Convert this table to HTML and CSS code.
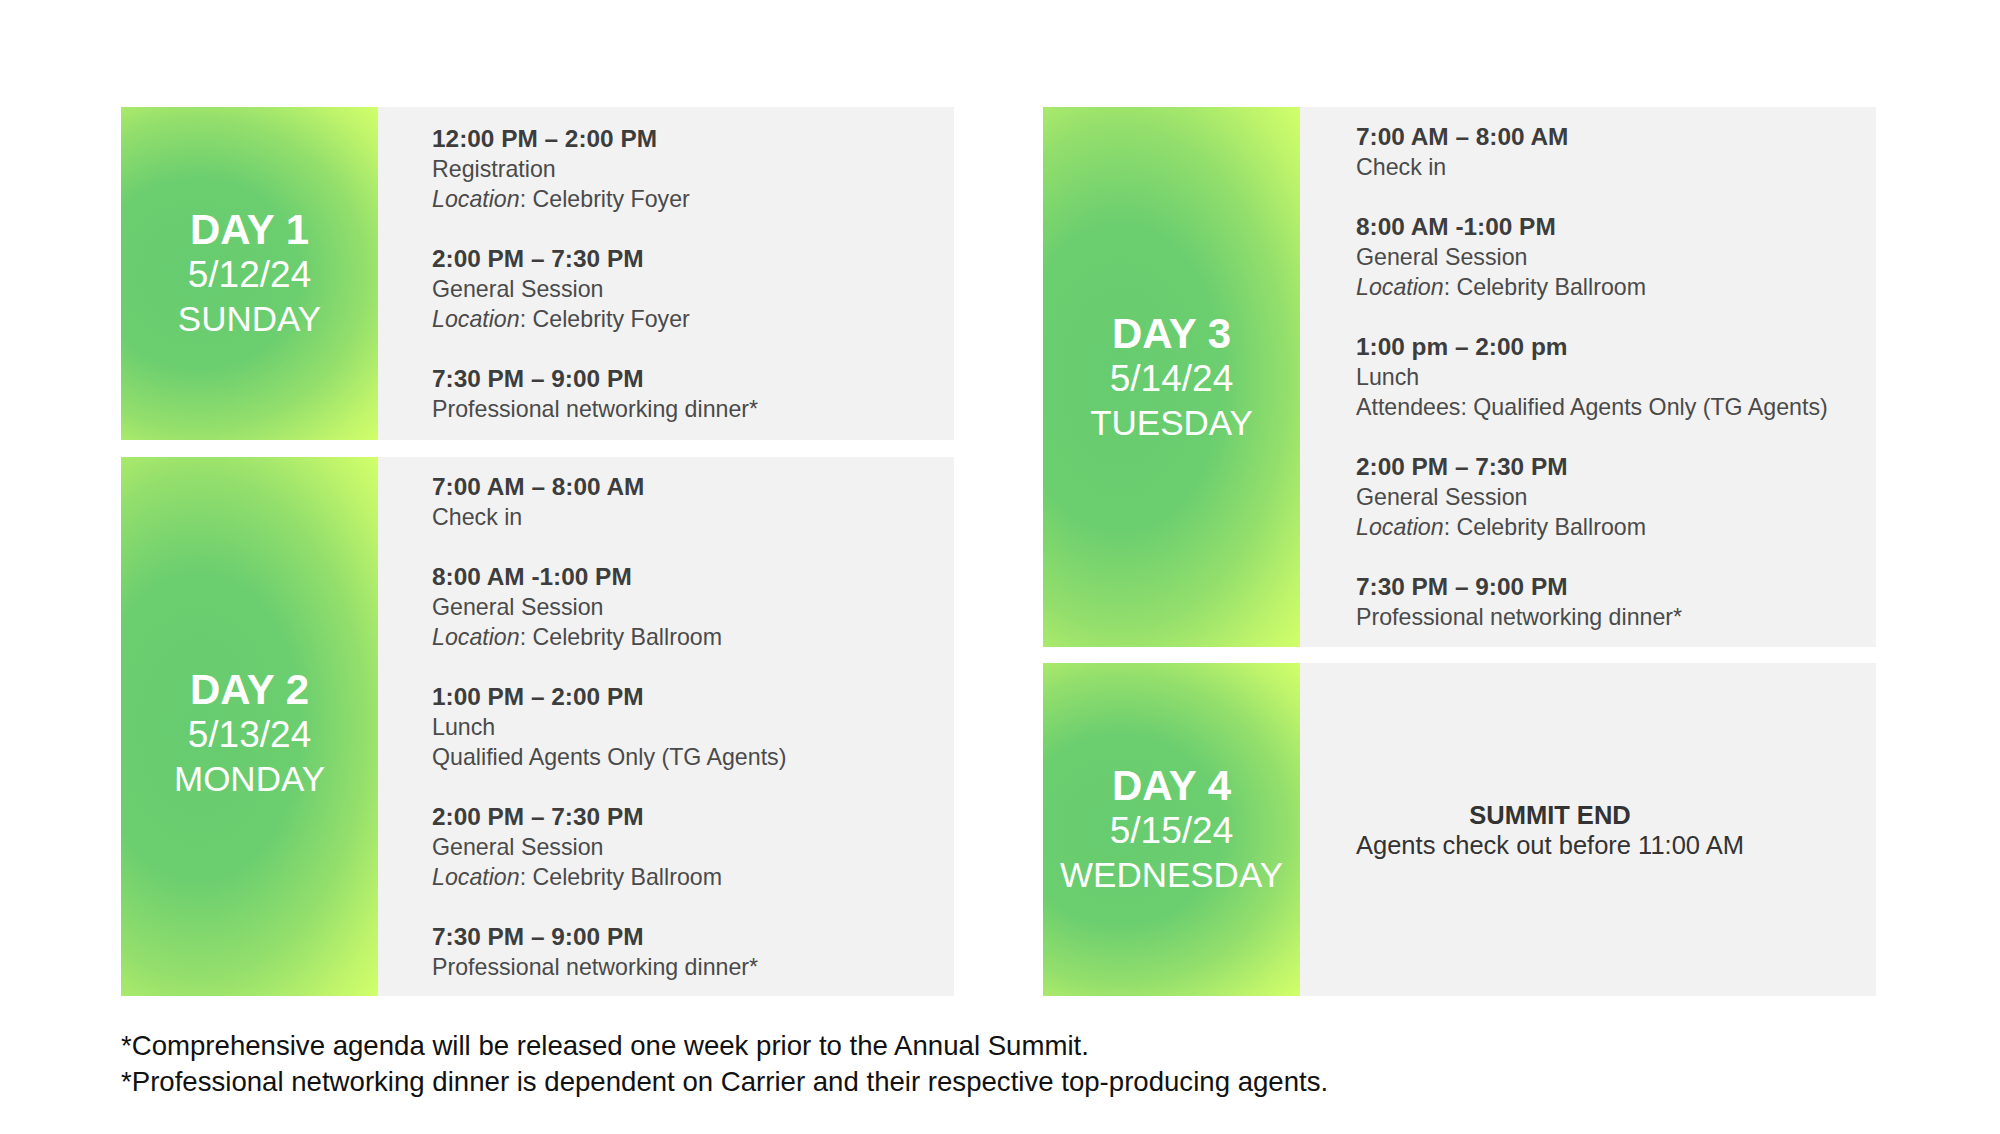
FILE: index.html
```html
<!DOCTYPE html>
<html lang="en">
<head>
<meta charset="utf-8">
<title>Summit Agenda</title>
<link rel="stylesheet" href="styles.css">
</head>
<body>
<main class="page">
  <div class="grid">
    <div class="column">
      <section class="day day-short">
        <div class="label">
          <div class="label-num">DAY 1</div>
          <div class="label-date">5/12/24</div>
          <div class="label-week">SUNDAY</div>
        </div>
        <div class="details">
          <div class="event">
            <div class="time">12:00 PM – 2:00 PM</div>
            <div class="line">Registration</div>
            <div class="line"><em>Location</em>: Celebrity Foyer</div>
          </div>
          <div class="event">
            <div class="time">2:00 PM – 7:30 PM</div>
            <div class="line">General Session</div>
            <div class="line"><em>Location</em>: Celebrity Foyer</div>
          </div>
          <div class="event">
            <div class="time">7:30 PM – 9:00 PM</div>
            <div class="line">Professional networking dinner*</div>
          </div>
        </div>
      </section>
      <section class="day day-tall">
        <div class="label label-low">
          <div class="label-num">DAY 2</div>
          <div class="label-date">5/13/24</div>
          <div class="label-week">MONDAY</div>
        </div>
        <div class="details">
          <div class="event">
            <div class="time">7:00 AM – 8:00 AM</div>
            <div class="line">Check in</div>
          </div>
          <div class="event">
            <div class="time">8:00 AM -1:00 PM</div>
            <div class="line">General Session</div>
            <div class="line"><em>Location</em>: Celebrity Ballroom</div>
          </div>
          <div class="event">
            <div class="time">1:00 PM – 2:00 PM</div>
            <div class="line">Lunch</div>
            <div class="line">Qualified Agents Only (TG Agents)</div>
          </div>
          <div class="event">
            <div class="time">2:00 PM – 7:30 PM</div>
            <div class="line">General Session</div>
            <div class="line"><em>Location</em>: Celebrity Ballroom</div>
          </div>
          <div class="event">
            <div class="time">7:30 PM – 9:00 PM</div>
            <div class="line">Professional networking dinner*</div>
          </div>
        </div>
      </section>
    </div>
    <div class="column">
      <section class="day day-tall-r">
        <div class="label">
          <div class="label-num">DAY 3</div>
          <div class="label-date">5/14/24</div>
          <div class="label-week">TUESDAY</div>
        </div>
        <div class="details details-r">
          <div class="event">
            <div class="time">7:00 AM – 8:00 AM</div>
            <div class="line">Check in</div>
          </div>
          <div class="event">
            <div class="time">8:00 AM -1:00 PM</div>
            <div class="line">General Session</div>
            <div class="line"><em>Location</em>: Celebrity Ballroom</div>
          </div>
          <div class="event">
            <div class="time">1:00 pm – 2:00 pm</div>
            <div class="line">Lunch</div>
            <div class="line">Attendees: Qualified Agents Only (TG Agents)</div>
          </div>
          <div class="event">
            <div class="time">2:00 PM – 7:30 PM</div>
            <div class="line">General Session</div>
            <div class="line"><em>Location</em>: Celebrity Ballroom</div>
          </div>
          <div class="event">
            <div class="time">7:30 PM – 9:00 PM</div>
            <div class="line">Professional networking dinner*</div>
          </div>
        </div>
      </section>
      <section class="day day-short">
        <div class="label">
          <div class="label-num">DAY 4</div>
          <div class="label-date">5/15/24</div>
          <div class="label-week">WEDNESDAY</div>
        </div>
        <div class="details details-r">
          <div class="end">
            <div class="end-title">SUMMIT END</div>
            <div class="end-text">Agents check out before 11:00 AM</div>
          </div>
        </div>
      </section>
    </div>
  </div>
  <footer class="notes">
    <p>*Comprehensive agenda will be released one week prior to the Annual Summit.</p>
    <p>*Professional networking dinner is dependent on Carrier and their respective top-producing agents.</p>
  </footer>
</main>
</body>
</html>
```
FILE: styles.css
```css
html, body {
  margin: 0;
  padding: 0;
  background: #ffffff;
}

body {
  font-family: "Liberation Sans", Arial, Helvetica, sans-serif;
  width: 2000px;
  height: 1134px;
  overflow: hidden;
}

.page {
  padding: 107px 0 0 121px;
}

.grid {
  display: grid;
  grid-template-columns: 833px 833px;
  column-gap: 89px;
}

.column {
  display: flex;
  flex-direction: column;
  gap: 17px;
}

.column + .column {
  gap: 16px;
}

.day {
  display: flex;
  background: #f2f2f2;
}

.day-short {
  height: 333px;
}

.day-tall {
  height: 539px;
}

.day-tall-r {
  height: 540px;
}

.label {
  width: 257px;
  flex: none;
  display: flex;
  flex-direction: column;
  align-items: center;
  justify-content: center;
  color: #ffffff;
  background: radial-gradient(farthest-corner at 30% 50%, #67cc70 0%, #6bce6f 40%, #94df6c 66%, #bdf36b 86%, #d2ff6a 100%);
}

.label-low {
  padding-top: 13px;
  box-sizing: border-box;
}

.label-num {
  font-size: 42px;
  font-weight: 700;
  line-height: 45px;
}

.label-date {
  font-size: 37px;
  line-height: 45px;
}

.label-week {
  font-size: 35px;
  line-height: 43px;
}

.details {
  flex: 1;
  display: flex;
  flex-direction: column;
  justify-content: center;
  padding: 0 0 0 54px;
  gap: 30px;
}

.details-r {
  padding-left: 56px;
}

.event {
  display: flex;
  flex-direction: column;
}

.time {
  font-size: 24.4px;
  font-weight: 700;
  line-height: 30px;
  color: #3d3d3d;
}

.line {
  font-size: 23.2px;
  line-height: 30px;
  color: #4a4a4a;
}

.line em {
  font-style: italic;
}

.end {
  align-self: flex-start;
  text-align: center;
  color: #333333;
}

.end-title {
  font-size: 25.5px;
  font-weight: 700;
  line-height: 30px;
}

.end-text {
  font-size: 25.5px;
  line-height: 30px;
}

.notes {
  margin-top: 32px;
  color: #111111;
  font-size: 27.6px;
  line-height: 36px;
}

.notes p {
  margin: 0;
}
```
